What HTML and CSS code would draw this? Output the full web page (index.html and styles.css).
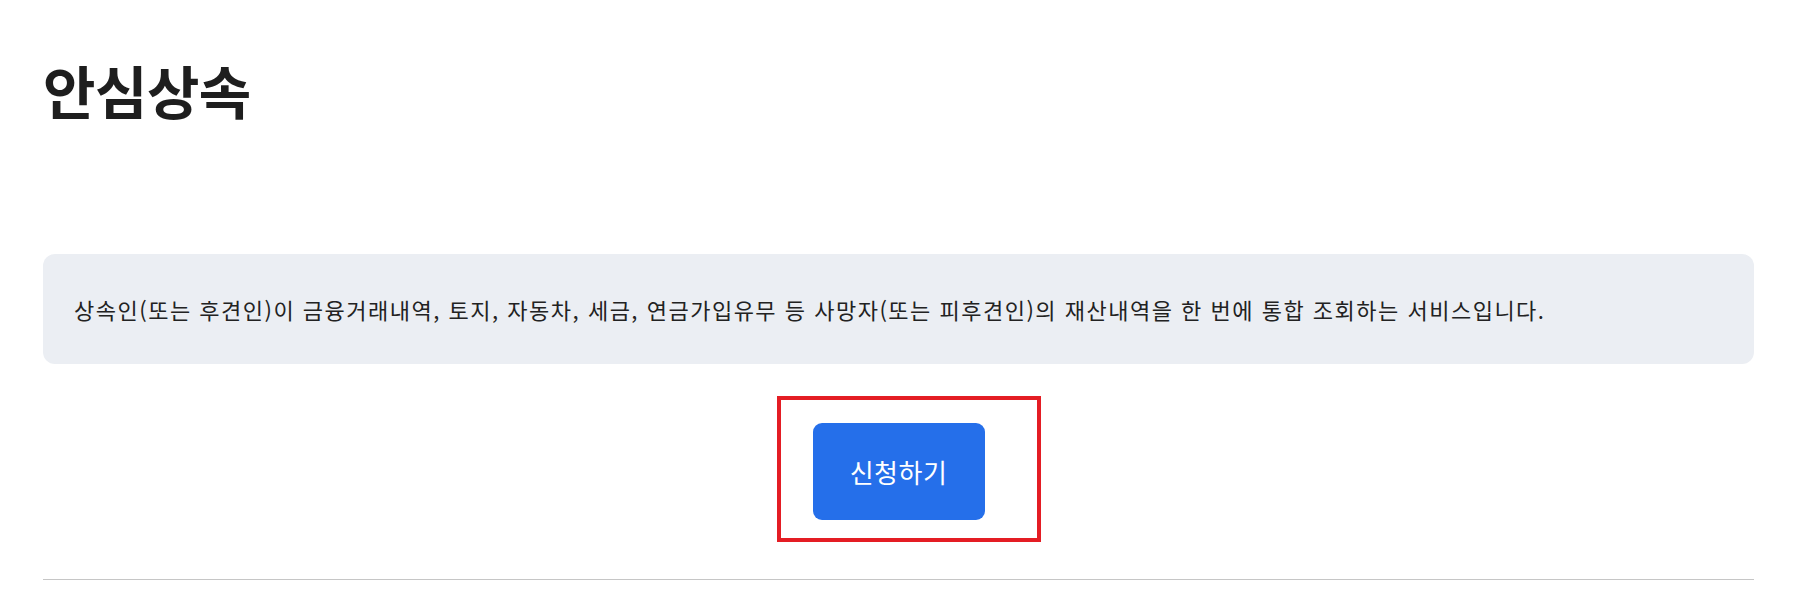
FILE: index.html
```html
<!DOCTYPE html>
<html lang="ko">
<head>
<meta charset="utf-8">
<title>안심상속</title>
<link rel="stylesheet" href="styles.css">
</head>
<body>
<main class="page">
  <h1 class="title">안심상속</h1>
  <div class="info">
    <p class="info-text">상속인(또는 후견인)이 금융거래내역, 토지, 자동차, 세금, 연금가입유무 등 사망자(또는 피후견인)의 재산내역을 한 번에 통합 조회하는 서비스입니다.</p>
  </div>
  <div class="actions">
    <span class="btn-wrap">
      <button class="btn-primary" type="button">신청하기</button>
      <span class="highlight"></span>
    </span>
  </div>
  <hr class="divider">
</main>
</body>
</html>
```

FILE: styles.css
```css
html, body {
  margin: 0;
  padding: 0;
  background: #ffffff;
}

body {
  font-family: "Noto Sans CJK KR", "Noto Sans", sans-serif;
  color: #222222;
}

.page {
  padding: 0 43px;
}

.title {
  margin: 0;
  padding-top: 50px;
  font-size: 57px;
  line-height: 78px;
  font-weight: 700;
  color: #1e1e1e;
  letter-spacing: -0.5px;
}

.info {
  margin-top: 126px;
  height: 110px;
  box-sizing: border-box;
  padding: 0 31px;
  background: #ebeef3;
  border-radius: 12px;
  display: flex;
  align-items: center;
}

.info-text {
  margin: 0;
  font-size: 22px;
  line-height: 30px;
  letter-spacing: 1.5px;
  color: #222222;
}

.actions {
  display: flex;
  justify-content: center;
  padding-top: 59px;
}

.btn-wrap {
  position: relative;
  display: inline-block;
}

.btn-primary {
  display: block;
  width: 172px;
  height: 97px;
  border: 0;
  border-radius: 9px;
  background: #256fea;
  color: #ffffff;
  font-family: "Noto Sans CJK KR", "Noto Sans", sans-serif;
  font-size: 26px;
  letter-spacing: 0.5px;
  padding: 0;
}

.highlight {
  position: absolute;
  left: -36px;
  top: -27px;
  right: -56px;
  bottom: -22px;
  border: 4px solid #e41d24;
  pointer-events: none;
}

.divider {
  margin: 59px 0 0;
  border: 0;
  border-top: 1px solid #c6c6c6;
  height: 0;
}
```
